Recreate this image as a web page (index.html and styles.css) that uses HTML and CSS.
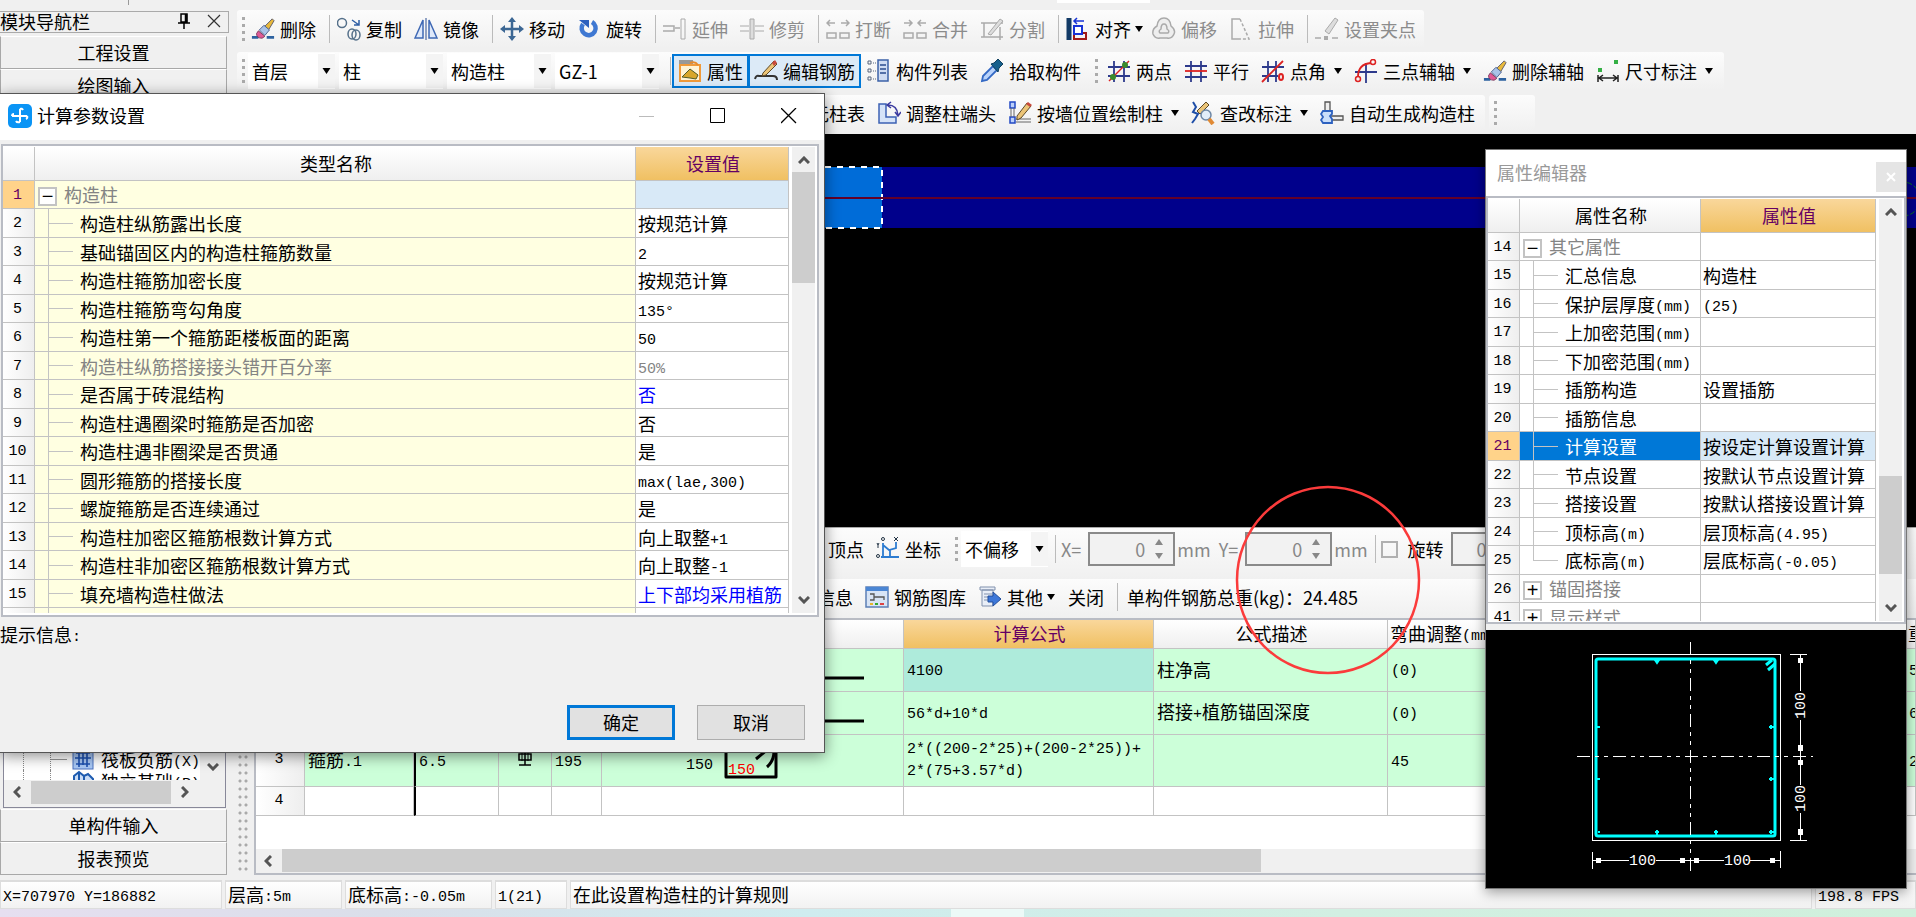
FILE: index.html
```html
<!DOCTYPE html>
<html lang="zh-CN">
<head>
<meta charset="utf-8">
<title>计算参数设置</title>
<link rel="stylesheet" href="styles.css">
</head>
<body>
<svg class="defs" aria-hidden="true">
  <symbol id="i-erase" viewBox="0 0 26 24"><path d="M1 21h7M17 21h8" stroke="#2d62a0" stroke-width="3"/><path d="M15 9l8-8 2 2-6 10z" fill="#e8b93c" stroke="#5a5a6a"/><path d="M9 13l5-5 6 5-5 6z" fill="#a9c3e8" stroke="#4b5f8c"/><path d="M8 14l7 6-3 2q-6 0-6-5z" fill="#e05a96" stroke="#7a3a5c"/></symbol>
  <symbol id="i-down" viewBox="0 0 8 6"><path d="M0 0h8L4 6z" fill="currentColor"/></symbol>
  <symbol id="i-chev" viewBox="0 0 12 8"><path d="M1 7l5-5 5 5" fill="none" stroke="#555" stroke-width="3"/></symbol>
</svg>
<div class="app">
  <div class="menustrip"><i class="tick"></i><i class="patch"></i></div>
  <div class="main">
    <aside class="nav">
      <header class="nav-title"><span>模块导航栏</span>
        <svg width="14" height="16" viewBox="0 0 14 16"><path d="M4 1h6v8H4zM1 10h12M7 10v6" fill="none" stroke="#000" stroke-width="1.5"/><path d="M9 1v8" stroke="#000" stroke-width="2.5"/></svg>
        <svg width="14" height="14" viewBox="0 0 14 14"><path d="M1 1l12 12M13 1L1 13" stroke="#333" stroke-width="1.2"/></svg>
      </header>
      <button class="nav-btn">工程设置</button>
      <button class="nav-btn">绘图输入</button>
      <div class="tree">
        <div class="tree-top">
          <div class="tree-list">
            <div class="tree-item"><svg width="22" height="22" viewBox="0 0 22 22"><rect x="1" y="1" width="20" height="20" fill="#a9c8f5" stroke="#4a72c0"/><path d="M4 5h14M4 16h14M3 10h16M7 3v16M15 3v16M11 5v12" stroke="#1c4fb0" stroke-width="1.6"/></svg><span>筏板负筋<b>(X)</b></span></div>
            <div class="tree-item low"><svg width="22" height="22" viewBox="0 0 22 22"><path d="M2 20V6l5-4 5 4 4-2 5 5v11z" fill="#c9dcf6" stroke="#1d5bb0" stroke-width="2"/><path d="M7 3v16M12 6v14" stroke="#1d5bb0" stroke-width="2"/></svg><span>独立基础<b>(P)</b></span></div>
          </div>
          <div class="tree-v"><svg class="flip" width="12" height="8"><use href="#i-chev"/></svg></div>
        </div>
        <div class="hscroll nav-h"><svg class="left" width="12" height="8"><use href="#i-chev"/></svg><i></i><svg class="right" width="12" height="8"><use href="#i-chev"/></svg></div>
      </div>
      <button class="nav-btn">单构件输入</button>
      <button class="nav-btn">报表预览</button>
    </aside>

    <div class="work">
      <div class="bars">
        <div class="bar bar1">
          <i class="grip"></i>
          <button class="tool"><svg><use href="#i-erase"/></svg>删除</button>
          <i class="sep"></i>
          <button class="tool"><svg viewBox="0 0 24 24"><circle cx="5" cy="6" r="4.500" fill="none" stroke="#55708a" stroke-width="1.500"/><path d="M15 3l7 5m0-5v5h-5" fill="none" stroke="#2f5fa5" stroke-width="1.500"/><ellipse cx="15" cy="17" rx="4" ry="5" fill="none" stroke="#55708a" stroke-width="1.500"/><ellipse cx="19" cy="18" rx="4" ry="5" fill="none" stroke="#55708a" stroke-width="1.500"/></svg>复制</button>
          <button class="tool"><svg viewBox="0 0 24 24"><path d="M9 3v18H1zM15 3v18h8z" fill="#dfe9fa" stroke="#3e68b4" stroke-width="1.500"/><path d="M12 1v22" stroke="#2b4c90"/></svg>镜像</button>
          <i class="sep"></i>
          <button class="tool"><svg viewBox="0 0 24 24"><path d="M12 3v18M3 12h18" stroke="#3c6794" stroke-width="2.500"/><path d="M12 0l4 5H8zM12 24l4-5H8zM0 12l5-4v8zM24 12l-5-4v8z" fill="#3c6794"/></svg>移动</button>
          <button class="tool"><svg viewBox="0 0 24 24"><path d="M15 5a7 7 0 1 1-9 2" fill="none" stroke="#3f78d2" stroke-width="4.500"/><path d="M2 3h10v8z" fill="#2d60bd"/></svg>旋转</button>
          <i class="sep"></i>
          <button class="tool" disabled><svg viewBox="0 0 24 24"><path d="M0 9h11v5H0M12 11h5" fill="none" stroke="currentColor" stroke-width="1.500"/><path d="M18 2h4v20h-4z" fill="none" stroke="currentColor"/></svg>延伸</button>
          <button class="tool" disabled><svg viewBox="0 0 24 24"><path d="M0 9h9M0 14h9M15 9h9M15 14h9" stroke="currentColor" stroke-dasharray="9 6 2 2"/><path d="M10 2h4v20h-4z" fill="#ddd" stroke="currentColor"/></svg>修剪</button>
          <i class="sep"></i>
          <button class="tool" disabled><svg viewBox="0 0 24 24"><path d="M1 16h9v5H1zM14 16h9v5h-9z" fill="none" stroke="currentColor" stroke-width="1.500"/><path d="M1 6h8M4 3L1 6l3 3M15 6h8M20 3l3 3-3 3" fill="none" stroke="currentColor" stroke-width="1.500"/></svg>打断</button>
          <button class="tool" disabled><svg viewBox="0 0 24 24"><path d="M1 16h9v5H1zM14 16h9v5h-9z" fill="none" stroke="currentColor" stroke-width="1.500"/><path d="M1 6h8M6 3l3 3-3 3M15 6h8M18 3l-3 3 3 3" fill="none" stroke="currentColor" stroke-width="1.500"/></svg>合并</button>
          <button class="tool" disabled><svg viewBox="0 0 24 24"><path d="M1 6h22M1 20h22M4 6v14M20 10v13" stroke="currentColor" stroke-width="1.500"/><path d="M8 17L20 2l3 2L11 18z" fill="#ddd" stroke="currentColor"/></svg>分割</button>
          <i class="sep"></i>
          <button class="tool"><svg viewBox="0 0 24 24"><path d="M3 1v22" stroke="#123a66" stroke-width="5"/><path d="M8 16h12v6H8z" fill="none" stroke="#a01818" stroke-width="2"/><path d="M8 9h8v8H8z" fill="#fff" stroke="#1733d6" stroke-width="2"/><path d="M8 4h10M11 1L8 4l3 3" fill="none" stroke="#1733d6" stroke-width="1.500"/></svg>对齐<svg class="dd tight"><use href="#i-down"/></svg></button>
          <button class="tool" disabled><svg viewBox="0 0 24 24"><path d="M12 1q6 0 7 8 5 4 3 8-2 5-7 4H8q-5 1-7-4-1-5 4-8 1-8 7-8z" fill="#eee" stroke="currentColor" stroke-width="1.500"/><path d="M12 7q3 0 3 5 3 2 1 4H8q-2-2 1-4 0-5 3-5z" fill="none" stroke="currentColor" stroke-width="1.500"/></svg>偏移</button>
          <button class="tool" disabled><svg viewBox="0 0 24 24"><path d="M11 2H3v20h8" fill="none" stroke="currentColor" stroke-width="1.500"/><path d="M11 2l9 20h-9" fill="none" stroke="currentColor" stroke-width="1.500" stroke-dasharray="3 2"/></svg>拉伸</button>
          <i class="sep"></i>
          <button class="tool" disabled><svg viewBox="0 0 24 24"><path d="M10 14L20 1l3 2-9 14z" fill="#ddd" stroke="currentColor"/><path d="M0 21h6M17 21h6" stroke="currentColor" stroke-width="1.500"/><path d="M9 19h4v4H9z" fill="currentColor"/></svg>设置夹点</button>
        </div>
      </div>
      <div class="bars">
        <div class="bar bar2">
          <i class="grip"></i>
          <span class="combo narrow"><select aria-label="楼层"><option>首层</option></select><svg><use href="#i-down"/></svg></span>
          <span class="combo"><select aria-label="构件大类"><option>柱</option></select><svg><use href="#i-down"/></svg></span>
          <span class="combo"><select aria-label="构件类型"><option>构造柱</option></select><svg><use href="#i-down"/></svg></span>
          <span class="combo"><select aria-label="构件"><option>GZ-1</option></select><svg><use href="#i-down"/></svg></span>
          <i class="sep"></i>
          <button class="tool on"><svg viewBox="0 0 24 24"><path d="M1 1h14v5H1z" fill="#999"/><path d="M2 6h20v16H2z" fill="#fff3d6" stroke="#f09a3a" stroke-width="2"/><path d="M4 18l8-8 8 6-2 4-6-1z" fill="#d8a62c" stroke="#4f5a28"/><path d="M12 4q5-2 8 2" fill="none" stroke="#e88a2a" stroke-width="2"/></svg>属性</button>
          <button class="tool on"><svg viewBox="0 0 24 24"><path d="M1 20q1-4 4-3h14q4 0 4 4" fill="none" stroke="#333" stroke-width="2"/><path d="M9 14L20 2l3 3-11 11-4 1z" fill="#ecc578" stroke="#5d4a28"/><path d="M18 4l3-3 2 3-3 3z" fill="#c84a3c"/></svg>编辑钢筋</button>
          <button class="tool"><svg viewBox="0 0 24 24"><path d="M11 1h10v21H11z" fill="#cfdcf3" stroke="#3c62a8" stroke-width="1.500"/><path d="M13 6h6M13 10h6M13 14h6" stroke="#2b4c90" stroke-width="1.500"/><path d="M1 2h3v3H1zM1 10h3v3H1zM1 18h3v3H1z" fill="none" stroke="#56657c"/><path d="M6 4h3M6 12h3M6 20h3" stroke="#56657c" stroke-dasharray="1 1"/></svg>构件列表</button>
          <button class="tool"><svg viewBox="0 0 24 24"><path d="M2 22l1-5L13 7l4 4L7 21z" fill="#b9d3fb" stroke="#3469c4" stroke-width="1.800"/><path d="M11 5l3-1 4-4 5 5-4 4-1 4z" fill="#17608c" stroke="#12415f"/></svg>拾取构件</button>
          <i class="grip late"></i>
          <button class="tool"><svg viewBox="0 0 24 24"><path d="M7 2v21M17 2v21M1 8h22M1 17h22" stroke="#2d3a8c" stroke-width="1.800"/><path d="M2 22L22 2" stroke="#d22" stroke-width="1.500"/><circle cx="6" cy="18" r="3" fill="#3c8a2c"/><circle cx="18" cy="6" r="3" fill="#3c8a2c"/></svg>两点</button>
          <button class="tool"><svg viewBox="0 0 24 24"><path d="M7 2v21M17 2v21M1 7h22M1 18h22" stroke="#2d3a8c" stroke-width="1.800"/><path d="M1 12h22" stroke="#d22" stroke-width="1.800"/></svg>平行</button>
          <button class="tool"><svg viewBox="0 0 24 24"><path d="M7 2v21M15 2v21M1 8h22M1 17h16" stroke="#2d3a8c" stroke-width="1.800"/><path d="M1 23L22 2" stroke="#d22" stroke-width="1.800"/><ellipse cx="20" cy="18" rx="2" ry="3" fill="none" stroke="#d22" stroke-width="2"/></svg>点角<svg class="dd"><use href="#i-down"/></svg></button>
          <button class="tool"><svg viewBox="0 0 24 24"><path d="M1 13h22M12 4v20" stroke="#2d3a8c" stroke-width="1.800"/><path d="M4 18Q4 5 17 4" fill="none" stroke="#d22" stroke-width="1.800"/><circle cx="4" cy="20" r="2.500" fill="none" stroke="#d22" stroke-width="1.500"/><circle cx="19" cy="3" r="2.500" fill="none" stroke="#d22" stroke-width="1.500"/></svg>三点辅轴<svg class="dd"><use href="#i-down"/></svg></button>
          <button class="tool"><svg><use href="#i-erase"/></svg>删除辅轴</button>
          <button class="tool"><svg viewBox="0 0 24 24"><path d="M2 16v7M22 16v7M3 19h18M7 16l-4 3 4 3M17 16l4 3-4 3" fill="none" stroke="#222" stroke-width="1.500"/><path d="M2 9h4v4H2zM18 1h4v4h-4z" fill="#35b045"/></svg>尺寸标注<svg class="dd"><use href="#i-down"/></svg></button>
        </div>
      </div>
      <div class="bars">
        <div class="bar bar3">
          <button class="tool covered">无柱表</button>
          <button class="tool"><svg viewBox="0 0 24 24"><path d="M2 3h7v13h10v6H2z" fill="#d5e3f8" stroke="#3c62b4" stroke-width="1.500"/><path d="M11 4q9 0 10 10M14 1l-4 3 4 3M18 11l3 4 3-4" fill="none" stroke="#3c3ca0" stroke-width="1.500"/></svg>调整柱端头</button>
          <button class="tool"><svg viewBox="0 0 24 24"><path d="M2 1h5v6H2zM2 16h5v6H2z" fill="#bcd0fa" stroke="#2248c4" stroke-width="1.500"/><path d="M3 7v9M6 7v9M8 18h15M8 21h15" stroke="#666"/><path d="M9 15L19 2l4 3-10 12-4 2z" fill="#ecc578" stroke="#5d4a28"/><path d="M18 3l2-2 4 3-2 2z" fill="#c84a3c"/></svg>按墙位置绘制柱<svg class="dd"><use href="#i-down"/></svg></button>
          <button class="tool"><svg viewBox="0 0 24 24"><path d="M2 1l3 5-3 5 5 2-3 5-3 4" fill="none" stroke="#1f4fa8" stroke-width="2"/><path d="M6 10l9-9 3 3-9 9z" fill="#ecc578" stroke="#5d4a28"/><circle cx="15" cy="14" r="5" fill="#e1edf9" stroke="#6d87a5" stroke-width="1.500"/><path d="M18 18l4 5" stroke="#e08a35" stroke-width="4"/></svg>查改标注<svg class="dd"><use href="#i-down"/></svg></button>
          <button class="tool"><svg viewBox="0 0 24 24"><path d="M5 1h5v11H5zM10 15h13v4H10z" fill="#eee" stroke="#555" stroke-width="1.300"/><path d="M3 10h9v3l-2 2 2 3v4H3l-2-3 2-3-2-3z" fill="#c9defa" stroke="#2c61c0" stroke-width="1.800"/></svg>自动生成构造柱</button>
        </div>
        <div class="bar stub"><i class="grip"></i></div>
      </div>

      <div class="canvas">
        <svg width="100%" height="100%">
          <rect x="0" y="33" width="100%" height="61" fill="#00008b"/>
          <rect x="0" y="33" width="645" height="61" fill="#006cd8"/>
          <path d="M0 33H645V94H0" fill="none" stroke="#fff" stroke-width="2" stroke-dasharray="6 6"/>
          <rect x="0" y="63" width="100%" height="2" fill="#640028"/>
          <circle cx="1666" cy="65" r="17" fill="none" stroke="#087a1c" stroke-dasharray="5 2"/>
        </svg>
      </div>

      <div class="bar low1">
        <button class="tool covered2">顶点</button>
        <button class="tool"><svg viewBox="0 0 24 24"><path d="M7 6v15M5 20h18M7 8l6 5 7-2V5M14 20v-7" fill="none" stroke="#2c7bd0" stroke-width="1.800"/><circle cx="7" cy="2" r="1.500" fill="none" stroke="#234"/><circle cx="2" cy="19" r="1.500" fill="none" stroke="#234"/><path d="M18 0l4 4m0-4l-4 4M1 6l1 2 1-2M2 8v3" fill="none" stroke="#234"/></svg>坐标</button>
        <i class="grip late"></i>
        <span class="combo narrow"><select aria-label="偏移方式"><option>不偏移</option></select><svg><use href="#i-down"/></svg></span>
        <i class="sep"></i>
        <label class="dim" for="ox">X=</label>
        <span class="spin"><input id="ox" value="0" disabled><span><svg class="flip"><use href="#i-down"/></svg><svg><use href="#i-down"/></svg></span></span>
        <span class="dim unit">mm</span>
        <label class="dim" for="oy">Y=</label>
        <span class="spin"><input id="oy" value="0" disabled><span><svg class="flip"><use href="#i-down"/></svg><svg><use href="#i-down"/></svg></span></span>
        <span class="dim">mm</span>
        <i class="sep"></i>
        <input class="check" type="checkbox" id="rot" disabled>
        <label class="rotlabel" for="rot">旋转</label>
        <span class="spin rest"><input aria-label="旋转角度" value="0.000" disabled></span>
      </div>
      <div class="bar low2">
        <button class="tool covered3">信息</button>
        <button class="tool"><svg viewBox="0 0 24 24"><path d="M1 2h22v20H1z" fill="#d8e4f5" stroke="#5c7fb5" stroke-width="1.500"/><path d="M1 2h22v4H1z" fill="#4b86d4"/><path d="M5 9h4v6H5M9 12h10v3" fill="none" stroke="#555" stroke-width="1.300"/><path d="M5 19h3" stroke="#e6b52b" stroke-width="2"/><path d="M10 19h3" stroke="#3a3" stroke-width="2"/><path d="M15 19h4" stroke="#d44" stroke-width="2"/></svg>钢筋图库</button>
        <button class="tool"><svg viewBox="0 0 24 24"><path d="M2 2h15v3H2zM4 5h11v16H4z" fill="#e9eef7" stroke="#8191ad"/><path d="M6 9h8M6 12h6M6 15h5" stroke="#8191ad"/><path d="M10 11h5V7l8 7-8 7v-4h-5z" fill="#3d77d8" stroke="#234f9c"/></svg>其他<svg class="dd tight"><use href="#i-down"/></svg></button>
        <button class="tool plain">关闭</button>
        <i class="sep"></i>
        <span class="weight">单构件钢筋总重(kg)：24.485</span>
      </div>

      <div class="lower">
        <div class="splitdots"></div>
        <div class="sheet">
          <table class="rebar">
            <colgroup><col class="w49"><col class="w109"><col class="w85"><col class="w53"><col class="w50"><col class="w301"><col class="w250"><col class="w234"><col class="w518"><col></colgroup>
            <thead><tr><th></th><th></th><th></th><th></th><th></th><th></th><th class="hot">计算公式</th><th>公式描述</th><th class="start">弯曲调整<b>(mm)</b></th><th class="start">重</th></tr></thead>
            <tbody>
              <tr class="r44"><th></th><td></td><td></td><td></td><td></td><td><svg class="shape" width="290" height="40"><path d="M120 28H259" stroke="#000" stroke-width="3"/></svg></td><td class="cur"><b>4100</b></td><td>柱净高</td><td><b>(0)</b></td><td><b>5</b></td></tr>
              <tr class="r44"><th></th><td></td><td></td><td></td><td></td><td><svg class="shape" width="290" height="40"><path d="M120 28H259" stroke="#000" stroke-width="3"/></svg></td><td><b>56*d+10*d</b></td><td>搭接<b>+</b>植筋锚固深度</td><td><b>(0)</b></td><td><b>6</b></td></tr>
              <tr class="r51"><th>3</th><td>箍筋<b>.1</b></td><td class="dark"><b>6.5</b></td><td class="mid"><svg width="14" height="16" viewBox="0 0 14 16"><path d="M7 1v14M1 15h12" stroke="#000" stroke-width="1.500"/><rect x="1" y="4" width="12" height="6" fill="none" stroke="#000" stroke-width="1.500"/><path d="M4 3v8M10 3v8" stroke="#000"/></svg></td><td><b>195</b></td><td><svg class="shape" width="290" height="49"><text x="81" y="33">150</text><path d="M121 3V41H171V3" fill="none" stroke="#000" stroke-width="3" stroke-linejoin="round"/><path d="M151 23l12-10M162 31q7-6 7-16" fill="none" stroke="#000" stroke-width="3"/><text class="red" x="123" y="38">150</text></svg></td><td class="wrap"><b>2*((200-2*25)+(200-2*25))+<br>2*(75+3.57*d)</b></td><td></td><td><b>45</b></td><td><b>2</b></td></tr>
              <tr class="blank"><th>4</th><td></td><td class="dark"></td><td></td><td></td><td></td><td></td><td></td><td></td><td></td></tr>
            </tbody>
          </table>
          <div class="hscroll sheet-h"><svg class="left" width="12" height="8"><use href="#i-chev"/></svg><i></i></div>
        </div>
      </div>
    </div>
  </div>
  <footer class="status">
    <span class="s222"><b>X=707970 Y=186882</b></span><span class="s118">层高<b>:5m</b></span><span class="s148">底标高<b>:-0.05m</b></span><span class="s73"><b>1(21)</b></span><span class="grow">在此设置构造柱的计算规则</span><span class="s101"><b>198.8 FPS</b></span>
  </footer>
  <div class="desktop"><i></i></div>
</div>

<section class="dialog" role="dialog" aria-label="计算参数设置">
  <header class="dlg-title">
    <svg width="24" height="24" viewBox="0 0 24 24"><rect width="24" height="24" rx="5" fill="#0a94f5"/><path d="M12 5v13M4 12h15M12 18q-3 1-4-1M12 5q2-1 3 1M4 12q0-2 2-2M19 12q1 2-1 3" fill="none" stroke="#fff" stroke-width="2"/></svg>
    <h1>计算参数设置</h1>
    <button aria-label="最小化"><svg width="16" height="16"><path d="M0 8.500h15" stroke="#bbb"/></svg></button>
    <button aria-label="最大化"><svg width="16" height="16"><path d="M.5.5h14v14H.5z" fill="none" stroke="#000"/></svg></button>
    <button aria-label="关闭"><svg width="16" height="16"><path d="M0 0l15 15M15 0L0 15" stroke="#000" stroke-width="1.300"/></svg></button>
  </header>
  <div class="gridbox dlg-grid">
    <div class="gridview">
      <table class="grid yellow">
        <colgroup><col class="w32"><col><col class="w153"></colgroup>
        <thead><tr><th></th><th>类型名称</th><th class="hot">设置值</th></tr></thead>
        <tbody>
          <tr><th class="pick">1</th><td class="group"><i class="box">−</i>构造柱</td><td class="cell-on"></td></tr>
          <tr><th>2</th><td class="leaf">构造柱纵筋露出长度</td><td>按规范计算</td></tr>
          <tr><th>3</th><td class="leaf">基础锚固区内的构造柱箍筋数量</td><td><b>2</b></td></tr>
          <tr><th>4</th><td class="leaf">构造柱箍筋加密长度</td><td>按规范计算</td></tr>
          <tr><th>5</th><td class="leaf">构造柱箍筋弯勾角度</td><td><b>135°</b></td></tr>
          <tr><th>6</th><td class="leaf">构造柱第一个箍筋距楼板面的距离</td><td><b>50</b></td></tr>
          <tr class="off"><th>7</th><td class="leaf">构造柱纵筋搭接接头错开百分率</td><td><b>50%</b></td></tr>
          <tr><th>8</th><td class="leaf">是否属于砖混结构</td><td class="blue">否</td></tr>
          <tr><th>9</th><td class="leaf">构造柱遇圈梁时箍筋是否加密</td><td>否</td></tr>
          <tr><th>10</th><td class="leaf">构造柱遇非圈梁是否贯通</td><td>是</td></tr>
          <tr><th>11</th><td class="leaf">圆形箍筋的搭接长度</td><td><b>max(lae,300)</b></td></tr>
          <tr><th>12</th><td class="leaf">螺旋箍筋是否连续通过</td><td>是</td></tr>
          <tr><th>13</th><td class="leaf">构造柱加密区箍筋根数计算方式</td><td>向上取整<b>+1</b></td></tr>
          <tr><th>14</th><td class="leaf">构造柱非加密区箍筋根数计算方式</td><td>向上取整<b>-1</b></td></tr>
          <tr><th>15</th><td class="leaf">填充墙构造柱做法</td><td class="blue">上下部均采用植筋</td></tr>
          <tr><th></th><td class="leaf"></td><td></td></tr>
        </tbody>
      </table>
    </div>
    <div class="vscroll"><svg width="12" height="8"><use href="#i-chev"/></svg><div class="track"><i class="thumb-a"></i></div><svg class="flip" width="12" height="8"><use href="#i-chev"/></svg></div>
  </div>
  <p class="hint">提示信息<b>:</b></p>
  <div class="dlg-actions"><button class="primary">确定</button><button>取消</button></div>
</section>

<section class="props" aria-label="属性编辑器">
  <header class="props-title"><h2>属性编辑器</h2><button aria-label="关闭"><svg width="10" height="10"><path d="M1 1l8 8M9 1L1 9" stroke="#fff" stroke-width="2"/></svg></button></header>
  <div class="gridbox props-grid">
    <div class="gridview">
      <table class="grid">
        <colgroup><col class="w32"><col><col class="w175"></colgroup>
        <thead><tr><th></th><th>属性名称</th><th class="hot">属性值</th></tr></thead>
        <tbody>
          <tr><th>14</th><td class="group"><i class="box">−</i>其它属性</td><td></td></tr>
          <tr><th>15</th><td class="leaf">汇总信息</td><td>构造柱</td></tr>
          <tr><th>16</th><td class="leaf">保护层厚度<b>(mm)</b></td><td><b>(25)</b></td></tr>
          <tr><th>17</th><td class="leaf">上加密范围<b>(mm)</b></td><td></td></tr>
          <tr><th>18</th><td class="leaf">下加密范围<b>(mm)</b></td><td></td></tr>
          <tr><th>19</th><td class="leaf">插筋构造</td><td>设置插筋</td></tr>
          <tr><th>20</th><td class="leaf">插筋信息</td><td></td></tr>
          <tr><th class="pick">21</th><td class="leaf sel">计算设置</td><td class="cell-on">按设定计算设置计算</td></tr>
          <tr><th>22</th><td class="leaf">节点设置</td><td>按默认节点设置计算</td></tr>
          <tr><th>23</th><td class="leaf">搭接设置</td><td>按默认搭接设置计算</td></tr>
          <tr><th>24</th><td class="leaf">顶标高<b>(m)</b></td><td>层顶标高<b>(4.95)</b></td></tr>
          <tr><th>25</th><td class="leaf end">底标高<b>(m)</b></td><td>层底标高<b>(-0.05)</b></td></tr>
          <tr><th>26</th><td class="group shut"><i class="box">+</i>锚固搭接</td><td></td></tr>
          <tr><th>41</th><td class="group shut"><i class="box">+</i>显示样式</td><td></td></tr>
        </tbody>
      </table>
    </div>
    <div class="vscroll"><svg width="12" height="8"><use href="#i-chev"/></svg><div class="track low"><i class="thumb-b"></i></div><svg class="flip" width="12" height="8"><use href="#i-chev"/></svg></div>
  </div>
  <div class="section-view">
    <svg width="420" height="258" viewBox="0 0 420 258" fill="none">
      <rect x="106.500" y="24.500" width="188" height="186" stroke="#fff"/>
      <rect x="110" y="29" width="179" height="177" rx="2" stroke="#0ff" stroke-width="3"/>
      <path d="M280 35l6-5M282 40l7-6" stroke="#0ff" stroke-width="3"/>
      <path d="M169 30h4l-2 3zM228 30h4l-2 3zM169 202h4M171 200v5M228 202h4M230 200v5M111 97h3M111 149h3M283 97h5M285 95v4M283 149h5M285 147v4M283 202h5M285 200v4M112 202h2" stroke="#0ff" stroke-width="2"/>
      <path d="M204.500 12V242M91 126.500H327" stroke="#fff" stroke-dasharray="13 5 4 5 4 5"/>
      <path d="M106.500 222v17M294.500 221v17M107 230.500h36M170 230.500h68M264 230.500h31M304 24.500h17M304 210.500h17M314.500 25v36M314.500 90v65M314.500 183v28" stroke="#fff"/>
      <path d="M110 228h5v5h-5zM194 228h5v5h-5zM208 228h5v5h-5zM284 228h5v5h-5zM312 28h5v5h-5zM312 115h5v6h-5zM312 130h5v5h-5zM312 199h5v6h-5z" fill="#fff"/>
      <text x="143" y="235">100</text><text x="238" y="235">100</text>
      <text transform="translate(319 89) rotate(-90)">100</text><text transform="translate(319 182) rotate(-90)">100</text>
    </svg>
  </div>
</section>
<svg class="mark" width="190" height="192" viewBox="0 0 190 192"><ellipse cx="95" cy="96" rx="91" ry="93" fill="none" stroke="#fb3b3b" stroke-width="2.500"/></svg>
</body>
</html>
```

FILE: styles.css
```css
* { box-sizing: border-box; }
html, body { margin: 0; height: 100%; }
body { position: relative; overflow: hidden; background: #f0f0f0; color: #000; font: 18px/24px "Noto Sans CJK SC", sans-serif; }
button, input, select { font: inherit; color: inherit; }
button { border: 0; padding: 0; background: none; }
b { font: 15px/18px "Liberation Mono", monospace; vertical-align: 1px; }
svg { flex: none; display: block; }
.defs { position: absolute; width: 0; height: 0; }
.flip { transform: rotate(180deg); }
.left { transform: rotate(-90deg); }
.right { transform: rotate(90deg); }

.app { display: flex; flex-direction: column; height: 100vh; }
.menustrip { display: flex; height: 10px; flex: none; }
.tick { width: 129px; height: 5px; border-right: 1px solid #999; }
.patch { width: 93px; height: 3px; margin-left: 928px; background: #fff; }
.main { display: flex; flex: 1; min-height: 0; gap: 8px; }

.nav { display: flex; flex-direction: column; width: 229px; flex: none; padding-bottom: 5px; }
.nav-title { display: flex; align-items: center; gap: 16px; height: 22px; margin: 1px 0 3px; padding: 0 7px 2px 0; border: 1px solid #aaa; border-left: 0; flex: none; }
.nav-title span { flex: 1; }
.nav-btn { height: 33px; margin-right: 2px; padding-bottom: 2px; flex: none; border: 1px solid #a8a8a8; border-top-color: #fff; background: #f0f0f0; }
.tree { flex: 1; display: flex; flex-direction: column; margin: 0 3px 1px 3px; border: 1px solid #889; min-height: 0; }
.tree-top { flex: 1; display: flex; min-height: 0; }
.tree-list { flex: 1; display: flex; flex-direction: column; justify-content: flex-end; overflow: hidden; padding-left: 19px; background: #fff; }
.tree-item { display: flex; align-items: center; gap: 7px; height: 22px; padding-left: 20px; border-left: 1px dotted #888; white-space: nowrap; flex: none; }
.tree-item::before { content: ""; width: 16px; height: 22px; margin: 0 -2px 0 6px; background: linear-gradient(#999, #999) 0 50% / 100% 1px no-repeat; border-left: 1px dotted #888; }
.tree-item.low { margin-bottom: -12px; }
.tree-item.low::before { background: none; }
.tree-v { display: flex; align-items: flex-end; justify-content: center; width: 25px; padding-bottom: 9px; background: #f0f0f0; }
.hscroll { display: flex; align-items: center; height: 24px; flex: none; background: #f0f0f0; }
.hscroll i { height: 23px; background: #cdcdcd; }
.nav-h { gap: 8px; height: 27px; padding: 0 0 3px 7px; }
.nav-h i { width: 140px; }

.work { flex: 1; min-width: 0; display: flex; flex-direction: column; }
.bars { display: flex; gap: 4px; flex: none; height: 42px; align-items: flex-start; }
.bars:nth-child(3) { height: 40px; }
.bar { display: flex; align-items: center; height: 38px; background: linear-gradient(#fcfcfc, #f0f0f0); border-radius: 3px; flex: none; white-space: nowrap; }
.bar1 { padding-right: 2px; }
.bar2 { padding-right: 5px; }
.bar3 { padding-right: 4px; }
.bar3, .stub { margin-top: 1px; height: 36px; }
.stub { width: 46px; }
.grip { width: 3px; height: 24px; margin: 0 0 0 5px; flex: none; background: repeating-linear-gradient(#aaa 0 3px, transparent 3px 7px); }
.grip.late { margin: 0 3px 0 8px; }
.sep { width: 9px; height: 28px; flex: none; background: linear-gradient(#bbb, #bbb) 7px 0 / 1px 100% no-repeat; }
.tool { display: flex; align-items: center; height: 34px; padding: 0 6px; gap: 5px; flex: none; }
.tool > svg { width: 24px; height: 24px; }
.tool > .dd { width: 8px; height: 6px; margin: 0 0 0 3px; }
.tool > .dd.tight { margin: 0 -3px 0 -1px; }
.tool:disabled { color: #8c8c8c; }
.tool:disabled > svg { color: #aaa; }
.tool.on { height: 34px; background: #dceaf7; border: 2px solid #0078d7; padding: 0 4px; }
.tool.on + .tool.on { margin-left: -1px; }
.covered { width: 634px; justify-content: flex-end; }
.covered2 { width: 633px; justify-content: flex-end; }
.covered3 { width: 622px; justify-content: flex-end; }

.combo { display: flex; align-items: center; width: 104px; height: 36px; margin-right: 4px; background: #fff; }
.combo.narrow { width: 87px; margin-left: 3px; }
.combo select { appearance: none; flex: 1; min-width: 0; height: 34px; padding: 0 0 0 4px; border: 0; background: none; }
.combo svg { width: 17px; height: 34px; padding: 14px 4px; background: #f4f4f4; }

.canvas { flex: 1; min-height: 0; background: #000; overflow: hidden; }
.low1, .low2 { border-radius: 0; overflow: hidden; }
.low1 { height: 52px; padding-bottom: 9px; border-top: 1px solid #aaa; }
.low2 { height: 39px; padding-bottom: 3px; }
.low1 .combo.narrow { margin: 0; }
.dim { color: #888; margin-left: 4px; }
.unit { margin-right: 4px; }
.spin { display: flex; width: 87px; height: 34px; margin-left: 7px; border: 2px solid #8a8a8a; background: #f2f2f2; color: #888; }
.spin + .dim { margin-left: 2px; }
.spin input { flex: 1; min-width: 0; width: 40px; border: 0; padding: 0; text-align: right; background: none; color: #888; }
.spin > span { display: flex; flex-direction: column; justify-content: space-between; width: 28px; padding: 5px 10px; }
.spin > span svg { width: 8px; height: 6px; }
.spin.rest input { text-align: left; padding-left: 24px; }
.check { appearance: none; width: 17px; height: 17px; margin: 0 10px 0 4px; border: 2px solid #b0b0b0; flex: none; }
.plain { padding-left: 10px; }
.weight { margin-left: 8px; }

.lower { display: flex; gap: 6px; flex: none; height: 262px; padding-bottom: 5px; background: #f0f0f0; }
.splitdots { width: 11px; margin-bottom: 3px; background: radial-gradient(circle at 3px 3px, #aaa 1px, transparent 2px) 0 0 / 6px 8px; }
.sheet { flex: 1; min-width: 0; display: flex; flex-direction: column; justify-content: space-between; overflow: hidden; border: 2px solid #b9bcc4; border-right: 0; background: #fff; }
.sheet-h { gap: 8px; padding: 0 0 1px 6px; }
.sheet-h i { width: 979px; }

table { border-collapse: separate; border-spacing: 0; table-layout: fixed; width: 100%; }
th, td { padding: 0 0 0 2px; border: 0 solid #c3c3c3; border-width: 0 1px 1px 0; overflow: hidden; white-space: nowrap; text-align: left; font-weight: 400; line-height: 24px; }
thead th { padding-bottom: 2px; text-align: center; background: linear-gradient(#fff, #efefef); }
thead th.hot { color: #640064; background: linear-gradient(#f9d79b, #f0c062); }
tbody th { padding: 0 2px 0 0; text-align: center; font: 15px/24px "Liberation Mono", monospace; background: linear-gradient(90deg, #fff, #eee); }
.rebar td { padding-left: 3px; padding-bottom: 3px; background: #ccffd9; }
.rebar td:has(svg) { padding-bottom: 0; }
.rebar tbody th { padding-bottom: 1px; }
.rebar thead tr { height: 29px; }
.rebar .start { text-align: left; }
.rebar .wrap { padding-bottom: 4px; line-height: 18px; }
.r44 { height: 43px; }
.r51 { height: 52px; }
.blank { height: 29px; }
.rebar .blank td { background: #fff; }
.rebar td.cur { background: #aeebdb; }
.rebar td.dark { border-left: 2px solid #000; }
.rebar td.mid { padding: 0 0 6px; }
.mid svg { margin: 0 auto; }
.shape text { font: 15px "Liberation Mono", monospace; }
.shape .red { fill: #f00; }
.w49 { width: 49px; } .w109 { width: 109px; } .w85 { width: 85px; } .w53 { width: 53px; } .w50 { width: 50px; }
.w301 { width: 302px; } .w250 { width: 250px; } .w234 { width: 234px; } .w518 { width: 518px; }
.w32 { width: 32px; } .w153 { width: 153px; } .w175 { width: 175px; }

.status { display: flex; gap: 3px; height: 29px; flex: none; }
.status span { padding-left: 2px; border: 1px solid #ddd; border-top: 2px solid #ddd; background: linear-gradient(#fff, #f2f2f2); white-space: nowrap; line-height: 24px; overflow: hidden; }
.s222 { width: 222px; } .s118 { width: 117px; } .s148 { width: 147px; } .s73 { width: 72px; } .s101 { width: 101px; }
.grow { flex: 1; }
.desktop { display: flex; justify-content: center; height: 8px; flex: none; background: linear-gradient(90deg, #e6dff0, #dadfea 20%, #cfecef 42%, #d2efe2 70%, #d0f0dc); }
.desktop i { width: 73px; margin-left: 58px; background: #ecf9f7; }

.dialog { position: absolute; left: 0; top: 93px; width: 825px; height: 660px; display: flex; flex-direction: column; background: #f0f0f0; border: 1px solid #555; border-left: 0; box-shadow: 0 3px 14px rgba(0, 0, 0, .45); }
.dlg-title { display: flex; align-items: center; height: 46px; padding: 0 0 2px 8px; background: #fff; }
.dlg-title h1 { flex: 1; margin: 0 0 2px 5px; font-size: 18px; font-weight: 400; }
.dlg-title button { width: 71px; display: flex; justify-content: center; }
.gridbox { display: flex; gap: 3px; overflow: hidden; border: 2px solid #b9bcc4; background: #fff; flex: none; }
.dlg-grid { margin: 4px 5px 0 1px; height: 473px; padding: 1px 2px 2px 0; }
.gridview { flex: 1; min-width: 0; overflow: hidden; }
.grid thead tr { height: 34px; }
.grid tbody tr { height: 28px; }
.grid tbody tr:nth-child(even) { height: 29px; }
.grid td { line-height: 26px; }
.grid tbody th { padding-top: 2px; }
.yellow td:nth-child(2) { background-color: #ffffe1; }
.grid .pick { color: #640064; background: #ffd38a; }
.grid .cell-on { background: #d8e9f7; }
.group { color: #848484; }
.grid .group { padding-left: 3px; }
.group .box { display: inline-flex; align-items: center; justify-content: center; width: 19px; height: 19px; margin: 0 7px 2px 0; border: 2px solid #c3c3c3; background: #fff; color: #000; font: 20px/15px "Liberation Sans", sans-serif; vertical-align: middle; }
.grid .leaf { padding-left: 45px; background-image: linear-gradient(#c3c3c3, #c3c3c3), linear-gradient(#c3c3c3, #c3c3c3); background-size: 1px 100%, 25px 1px; background-position: 13px 0, 13px 50%; background-repeat: no-repeat; }
.grid .leaf.end { background-size: 1px 50%, 25px 1px; }
.grid .leaf:empty { background-size: 1px 100%, 0 0; }
.grid .leaf.sel { background-color: #0078d7; color: #fff; }
.off td { color: #848484; }
.blue { color: #00f; }
.vscroll { display: flex; flex-direction: column; align-items: center; justify-content: space-between; width: 23px; padding: 9px 0; background: #f0f0f0; }
.track { flex: 1; align-self: stretch; display: flex; flex-direction: column; margin: 8px 0; }
.track.low { justify-content: flex-end; margin-bottom: 30px; }
.track i { background: #cdcdcd; }
.thumb-a { height: 111px; }
.thumb-b { height: 98px; }
.hint { margin: 5px 0 0; }
.dlg-actions { display: flex; justify-content: flex-end; gap: 22px; margin: auto 19px 12px 0; }
.dlg-actions button { width: 108px; height: 35px; padding-bottom: 2px; border: 1px solid #adadad; background: #e1e1e1; }
.dlg-actions .primary { border: 3px solid #0078d7; }

.props { position: absolute; right: 9px; top: 149px; width: 422px; background: #f0f0f0; border: 1px solid #777; box-shadow: 0 3px 12px rgba(0, 0, 0, .4); }
.props-title { display: flex; align-items: center; justify-content: space-between; height: 46px; padding-left: 11px; background: #fff; }
.props-title h2 { margin: 0 0 3px; font-size: 18px; font-weight: 400; color: #999; }
.props-title button { display: flex; align-items: center; justify-content: center; width: 30px; height: 30px; margin-top: 8px; background: #e5e5e5; }
.props-grid { height: 428px; padding: 1px 2px 1px 0; }
.section-view { margin-top: 6px; background: #000; }
.section-view text { fill: #fff; font: 15px "Liberation Mono", monospace; }
.mark { position: absolute; left: 1233px; top: 484px; pointer-events: none; }
```
